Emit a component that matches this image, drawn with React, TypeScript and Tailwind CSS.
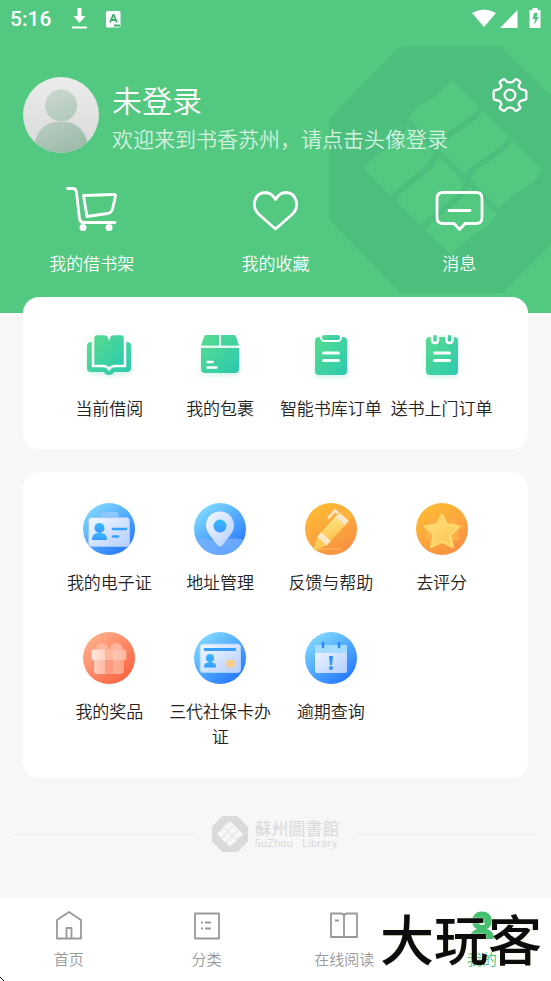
import type { ReactNode } from "react";

const FONT =
  "font-['Roboto','Noto_Sans_CJK_SC',sans-serif]";

function Gradients() {
  return (
    <svg className="absolute h-0 w-0" aria-hidden="true">
      <defs>
        <linearGradient id="green" x1="0" y1="0" x2="1" y2="1">
          <stop offset="0" stopColor="#58dc8c" />
          <stop offset="1" stopColor="#2cc9b2" />
        </linearGradient>
        <linearGradient id="blue" x1="0.15" y1="0.1" x2="0.8" y2="0.95">
          <stop offset="0" stopColor="#80d8ff" />
          <stop offset="0.5" stopColor="#50a8fc" />
          <stop offset="1" stopColor="#2878ff" />
        </linearGradient>
        <linearGradient id="orange" x1="0.2" y1="0" x2="0.8" y2="1">
          <stop offset="0" stopColor="#fdbc34" />
          <stop offset="1" stopColor="#f98f44" />
        </linearGradient>
        <linearGradient id="red" x1="0.1" y1="0.1" x2="0.8" y2="0.9">
          <stop offset="0" stopColor="#ffb08c" />
          <stop offset="1" stopColor="#fa6644" />
        </linearGradient>
        <linearGradient id="paper" x1="0" y1="0" x2="1" y2="1">
          <stop offset="0" stopColor="#f4f9ff" />
          <stop offset="1" stopColor="#b4ceff" />
        </linearGradient>
        <linearGradient id="sky" x1="0" y1="0" x2="0" y2="1">
          <stop offset="0" stopColor="#38bcfc" />
          <stop offset="1" stopColor="#3898fc" />
        </linearGradient>
        <linearGradient id="gold" x1="0" y1="0" x2="1" y2="1">
          <stop offset="0" stopColor="#ffe484" />
          <stop offset="1" stopColor="#fcc04c" />
        </linearGradient>
        <linearGradient id="blush" x1="0" y1="0" x2="1" y2="0">
          <stop offset="0" stopColor="#ffe6dc" />
          <stop offset="1" stopColor="#fcb49c" />
        </linearGradient>
        <linearGradient id="avatarBack" x1="0" y1="0" x2="0" y2="1">
          <stop offset="0" stopColor="#ececec" />
          <stop offset="1" stopColor="#d8d8d8" />
        </linearGradient>
        <linearGradient id="avatarBody" gradientUnits="userSpaceOnUse" x1="24" y1="12" x2="52" y2="76">
          <stop offset="0" stopColor="#ccd9d1" />
          <stop offset="1" stopColor="#9cbaa8" />
        </linearGradient>
        <clipPath id="avatarClip">
          <circle cx="38" cy="38" r="38" />
        </clipPath>
        <clipPath id="discClip">
          <circle cx="26" cy="26" r="26" />
        </clipPath>
      </defs>
    </svg>
  );
}

function LibraryMark({ className, dark, light }: { className: string; dark: string; light: string }) {
  return (
    <svg viewBox="329 46 246 247" className={className} aria-hidden="true">
      <path d="M401 46H501L575 119V219L503 293H400L329 219V119Z" fill={dark} />
      <path
        d="M452 80L541 169c-4 18-30 22-44 42c-4 18-30 24-46 44L363 169c14-20 41-24 45-47c4-18 30-22 44-42Z"
        fill={light}
      />
      <path
        d="M408 122L497 211M481 109c-14 20-40 24-44 42M437 151c-4 23-31 27-45 49M511 139c-14 20-40 24-44 42M467 181c-4 23-31 27-45 49"
        fill="none"
        stroke={dark}
        strokeWidth="6"
      />
    </svg>
  );
}

function StatusBar() {
  return (
    <div className="flex h-[38px] items-center justify-between pl-[10px] pr-[9px] text-white">
      <div className="flex items-center">
        <span className="w-[62px] text-[21px] font-medium leading-[38px]">5:16</span>
        <svg viewBox="0 0 16 22" className="h-[22px] w-4" fill="currentColor" aria-hidden="true">
          <path d="M5.500 0h4v8h4L7.500 15 1.500 8h4ZM0 18.500h15v2H0Z" />
        </svg>
        <svg viewBox="0 0 15 17" className="ml-[18px] h-[17px] w-[15px]" aria-hidden="true">
          <rect width="14.500" height="16.500" rx="1.500" fill="#fff" />
          <path d="M4 11.500 7.200 4h.6L11 11.500M5.200 9h4.600M8 14.500h6" fill="none" stroke="#3fae6b" strokeWidth="1.800" />
        </svg>
      </div>
      <svg viewBox="0 0 70 22" className="h-[22px] w-[70px]" fill="#fff" aria-hidden="true">
        <path d="M0 5Q12-2 24 5L12 19Z" />
        <path d="M45.500 2V20H28Z" />
        <path d="M57.500 2h3V0h5v2h3V20h-11Z" />
        <path d="M62 5h4l-1.500 4H67l-5 8 1-6h-2.500Z" fill="#53c881" />
      </svg>
    </div>
  );
}

function Avatar() {
  return (
    <svg viewBox="0 0 76 76" className="size-[76px]" aria-hidden="true">
      <g clipPath="url(#avatarClip)">
        <rect width="76" height="76" fill="url(#avatarBack)" />
        <circle cx="38" cy="28.500" r="16" fill="url(#avatarBody)" />
        <path d="M10 76C11 56 21 45 34 45h8c13 0 23 11 24 31Z" fill="url(#avatarBody)" />
      </g>
    </svg>
  );
}

function GearIcon() {
  return (
    <svg viewBox="-54 -54 108 108" className="size-9" fill="none" stroke="#fff" strokeWidth="7" strokeLinejoin="round" aria-hidden="true">
      <path d="M-49-8Q-49-14-43-15L-34-17Q-29-18-27-24Q-25-27-28-32Q-34-39-28-42L-20-47Q-16-49-13-44Q-9-38-4-38H4Q9-38 13-44Q16-49 20-47L28-42Q34-39 28-32Q25-27 27-24Q29-18 34-17L43-15Q49-14 49-8V8Q49 14 43 15L34 17Q29 18 27 24Q25 27 28 32Q34 39 28 42L20 47Q16 49 13 44Q9 38 4 38H-4Q-9 38-13 44Q-16 49-20 47L-28 42Q-34 39-28 32Q-25 27-27 24Q-29 18-34 17L-43 15Q-49 14-49 8Z" />
      <circle r="16" />
    </svg>
  );
}

const shortcuts: { label: string; icon: ReactNode }[] = [
  {
    label: "我的借书架",
    icon: (
      <>
        <path d="M1.500 4.500H7q3 0 3.500 4l3 26q.5 4 4 4H49" />
        <path d="M17.500 11.500 48 10.500q1.500 0 1.500 1.500l-3 13q-1 4-5 4.500L21 32.500Z" />
        <circle cx="17" cy="43.500" r="3.500" fill="#fff" stroke="none" />
        <circle cx="43" cy="43.500" r="3.500" fill="#fff" stroke="none" />
      </>
    ),
  },
  {
    label: "我的收藏",
    icon: <path d="M26.500 45 10 30.500C2 23 5 9 16 8.500c4 0 8 2.500 10.500 7 2.500-4.500 6.500-7 10.500-7C48 9 51 23 43 30.500Z" />,
  },
  {
    label: "消息",
    icon: (
      <>
        <path d="M10 8.500H43q6 0 6 6v19q0 6-6 6H32l-5.500 6-5.500-6H10q-6 0-6-6v-19q0-6 6-6Z" />
        <path d="M16 26.500h21" />
      </>
    ),
  },
];

function Header() {
  return (
    <header className="relative h-[313px] overflow-hidden bg-[#53c881] text-white">
      <LibraryMark
        className="absolute -right-6 top-[46px] h-[247px] w-[246px]"
        dark="#4cbe7e"
        light="#53c881"
      />
      <div className="relative">
        <StatusBar />
        <div className="flex items-start px-[23px] pt-[39px]">
          <button type="button" aria-label="登录" className="shrink-0 rounded-full">
            <Avatar />
          </button>
          <div className="ml-[13px] mt-[5px]">
            <h1 className="text-[30px] font-[350] leading-10">未登录</h1>
            <p className="text-[21px] font-[350] leading-9 text-[#d5f2e0]">欢迎来到书香苏州，请点击头像登录</p>
          </div>
          <button type="button" aria-label="设置" className="ml-auto shrink-0">
            <GearIcon />
          </button>
        </div>
        <div className="mt-[26px] grid grid-cols-3">
          {shortcuts.map((s) => (
            <button key={s.label} type="button" className="flex flex-col items-center gap-4">
              <svg viewBox="0 0 52 52" className="size-[52px]" fill="none" stroke="#fff" strokeWidth="2.800" strokeLinecap="round" strokeLinejoin="round" aria-hidden="true">
                {s.icon}
              </svg>
              <span className="text-[17px] font-[350] leading-6">{s.label}</span>
            </button>
          ))}
        </div>
      </div>
    </header>
  );
}

type Entry = { label: string; icon: ReactNode };

const orders: Entry[] = [
  {
    label: "当前借阅",
    icon: (
      <>
        <path d="M8 13H44q4 0 4 4V39q0 4-4 4H31q-1 3-5 3t-5-3H8q-4 0-4-4V17q0-4 4-4Z" fill="url(#green)" />
        <path d="M10 9Q10 5 14 5H21q4 0 5 3 1-3 5-3h7q4 0 4 4V37H32q-4 0-6 3-2-3-6-3H10Z" fill="url(#green)" stroke="#fff" strokeWidth="2.500" />
      </>
    ),
  },
  {
    label: "我的包裹",
    icon: (
      <>
        <path d="M12 6H25V16.500H7l3-8.500q.5-2 2-2ZM27 6H40q1.500 0 2 2l3 8.500H27ZM7 19H45V40q0 4-4 4H11q-4 0-4-4Z" fill="url(#green)" />
        <path d="M13.500 33h5M13.500 38.500h9" stroke="#fff" strokeWidth="2.500" strokeLinecap="round" />
      </>
    ),
  },
  {
    label: "智能书库订单",
    icon: (
      <>
        <rect x="10" y="8" width="32" height="38" rx="4" fill="url(#green)" />
        <path d="M15 5v3q0 5 5 5h12q5 0 5-5V5Z" fill="#fff" />
        <rect x="17" y="6" width="18" height="5" rx="2.500" fill="url(#green)" />
        <path d="M18.500 24h15M18.500 31.500h15" stroke="#f1fffa" strokeWidth="3" strokeLinecap="round" />
      </>
    ),
  },
  {
    label: "送书上门订单",
    icon: (
      <>
        <rect x="10" y="8" width="32" height="38" rx="4" fill="url(#green)" />
        <path d="M16 5h6v6q0 3-3 3t-3-3ZM30.500 5h6v6q0 3-3 3t-3-3Z" fill="url(#green)" stroke="#fff" strokeWidth="2.500" />
        <path d="M13 3h27v3H13Z" fill="#fff" />
        <path d="M18.500 24h15M18.500 31.500h15" stroke="#fff" strokeWidth="3" strokeLinecap="round" />
      </>
    ),
  },
];

const services: Entry[] = [
  {
    label: "我的电子证",
    icon: (
      <>
        <circle cx="26" cy="26" r="26" fill="url(#blue)" />
        <rect x="17.500" y="9" width="18" height="8" rx="1.500" fill="#8cc8ff" />
        <rect x="5.500" y="14.500" width="41" height="29" rx="3" fill="url(#paper)" stroke="#9cc8ff" />
        <circle cx="16.500" cy="25" r="5" fill="url(#sky)" />
        <path d="M9 37q0-7 6-7h3q6 0 6 7Z" fill="url(#sky)" />
        <path d="M30 26H43M30 33.500h5" stroke="#38a0fc" strokeWidth="2.600" strokeLinecap="round" />
      </>
    ),
  },
  {
    label: "地址管理",
    icon: (
      <>
        <circle cx="26" cy="26" r="26" fill="url(#blue)" />
        <path d="M0 38q8-4 18-1 10-4 17-1 9-2 17 2V52H0Z" clipPath="url(#discClip)" fill="#78b0ff" opacity=".8" />
        <path d="M26 8.500c8 0 14 6 14 14 0 7-6 12-11 19q-3 4-6 0c-5-7-11-12-11-19 0-8 6-14 14-14Z" fill="url(#paper)" />
        <circle cx="26" cy="23" r="6.500" fill="url(#sky)" />
      </>
    ),
  },
  {
    label: "反馈与帮助",
    icon: (
      <>
        <circle cx="26" cy="26" r="26" fill="url(#orange)" />
        <path d="M9 46H36" stroke="#ffb85c" />
        <g transform="translate(27 27) rotate(42)">
          <path d="M-6-16v-4q0-6 6-6t6 6v4Z" fill="#fcb43c" />
          <path d="M-6.500-12h13V12h-13Z" fill="url(#gold)" />
          <path d="M-6.500 14h13L1.500 26q-1.500 2-3 0Z" fill="#fccc58" />
          <path d="M-6.500 9h13v6h-13Z" fill="#ffe8c8" />
          <path d="M-6.500-18h13v6h-13ZM-5.500-18h-6.500v12h2.500v-9h4Z" fill="#ffe8c8" />
        </g>
      </>
    ),
  },
  {
    label: "去评分",
    icon: (
      <>
        <circle cx="26" cy="26" r="26" fill="url(#orange)" />
        <path d="M15 12 19 20H29l-7 18-13-1 1-9-7-6h8ZM37 12l-4 8H26l7 18 10-1-1-9 7-6h-8Z" fill="#fcaf45" />
        <path d="M26 12 30.500 21.500 42.500 23.500 34 32 36.500 43.500 26 38.500 15.500 43.500 18 32 9.500 23.500 21.500 21.500Z" fill="url(#gold)" stroke="#ffd76c" strokeWidth="3" strokeLinejoin="round" />
      </>
    ),
  },
  {
    label: "我的奖品",
    icon: (
      <>
        <circle cx="26" cy="26" r="26" fill="url(#red)" />
        <path d="M12 18q1-7 7-7 6 1 7 7 1-6 7-7 6 0 7 7Z" fill="#ffb49c" />
        <path d="M11 27H41V39q0 3-3 3H14q-3 0-3-3Z" fill="url(#blush)" opacity=".7" />
        <rect x="8.500" y="17.500" width="35" height="10.500" rx="2" fill="url(#blush)" />
        <path d="M22 17.500h8V42H22Z" fill="#ff9c80" />
        <path d="M22 17.500h8V28H22Z" fill="#ffb89c" />
      </>
    ),
  },
  {
    label: "三代社保卡办证",
    icon: (
      <>
        <circle cx="26" cy="26" r="26" fill="url(#blue)" />
        <rect x="6" y="12" width="40.500" height="28.500" rx="3" fill="url(#paper)" stroke="#a8d0ff" />
        <path d="M10 16H42v3H10Z" fill="#38a0fc" />
        <circle cx="16" cy="26" r="4" fill="url(#sky)" />
        <path d="M14.500 28h3q0 3 2 3 2.500 0 2.500 4.500H10Q10 31 12.500 31q2 0 2-3Z" fill="url(#sky)" />
        <rect x="32" y="28" width="9" height="7.500" rx="1.500" fill="#f4cc94" />
      </>
    ),
  },
  {
    label: "逾期查询",
    icon: (
      <>
        <circle cx="26" cy="26" r="26" fill="url(#blue)" />
        <rect x="10" y="13" width="32" height="28" rx="2" fill="url(#paper)" />
        <path d="M12 13H40q2 0 2 2v6H10V15q0-2 2-2Z" fill="#a4dcff" />
        <path d="M18 11v4M34 11v4" stroke="#2888f4" strokeWidth="2.600" strokeLinecap="round" />
        <path d="M24 24h4l-1 9h-2Z" fill="#3090fc" />
        <circle cx="26" cy="36" r="2" fill="#3090fc" />
      </>
    ),
  },
];

function EntryGrid({ entries, className, shadow = "" }: { entries: Entry[]; className: string; shadow?: string }) {
  return (
    <section className={`relative mx-[23px] grid grid-cols-4 gap-y-9 rounded-2xl bg-white px-[31px] ${className}`}>
      {entries.map((e) => (
        <button key={e.label} type="button" className="flex flex-col items-center gap-4">
          <svg viewBox="0 0 52 52" className={`size-[52px] ${shadow}`} aria-hidden="true">
            {e.icon}
          </svg>
          <span className="w-[102px] text-center text-[17px] font-[350] leading-[25px] text-[#222]">{e.label}</span>
        </button>
      ))}
    </section>
  );
}

function LibraryFooter() {
  return (
    <div className="mb-[46px] mt-[38px] flex items-center px-[14px] text-[#d8d8d8]">
      <span className="h-px flex-1 bg-[#ededed]" />
      <div className="flex items-center px-4">
        <LibraryMark className="size-9" dark="#dadada" light="#f7f7f7" />
        <div className="ml-[7px]">
          <p className="font-['Noto_Sans_CJK_TC',sans-serif] text-[17px] font-normal leading-5">蘇州圖書館</p>
          <p className="whitespace-pre font-['DejaVu_Sans',sans-serif] text-[10px] leading-3">SuZhou   Library</p>
        </div>
      </div>
      <span className="h-px flex-1 bg-[#ededed]" />
    </div>
  );
}

const tabs: { label: string; active?: boolean; icon: ReactNode }[] = [
  { label: "首页", icon: <path d="M3 10 15 2 27 10V28.500H3ZM12.500 28.500V18h5v10.500" /> },
  {
    label: "分类",
    icon: <path d="M3 3.500H27V28.500H3ZM9 12.500h2M13 12.500h6M9 18.500h2M13 18.500h6" />,
  },
  {
    label: "在线阅读",
    icon: <path d="M2 3.500H12q3 0 3 3 0-3 3-3H28V27H2ZM15 6V27M6 10.500h4" />,
  },
  {
    label: "我的",
    active: true,
    icon: (
      <>
        <path d="M3 29q0-8 7-10-5-3-5-8 1-9.500 10-9.500t10 9.500q0 5-5 8 7 2 7 10Z" fill="#45bf70" stroke="none" />
        <path d="M12.500 13q2.500 2 5 0" stroke="#fff" />
      </>
    ),
  },
];

function TabBar() {
  return (
    <nav className="relative grid grid-cols-4 bg-white pb-[11px] pt-3">
      {tabs.map((t) => (
        <a
          key={t.label}
          href="#"
          aria-current={t.active ? "page" : undefined}
          className={`flex flex-col items-center gap-[10px] ${t.active ? "text-[#45bf70]" : "text-[#999]"}`}
        >
          <svg viewBox="0 0 30 30" className="size-[30px]" fill="none" stroke="currentColor" strokeWidth="1.800" strokeLinejoin="round" aria-hidden="true">
            {t.icon}
          </svg>
          <span className="text-[15px] font-[350] leading-5">{t.label}</span>
        </a>
      ))}
      <span className="pointer-events-none absolute bottom-[6px] right-[9px] whitespace-nowrap text-[54px] font-medium leading-[64px] text-[#0c0c0c] [text-shadow:0_0_2px_#f3ecc8]">
        大玩客
      </span>
      <svg viewBox="0 0 4 4" className="absolute bottom-0 left-0 size-1" aria-hidden="true">
        <path d="M0 0h1v1H0ZM1 1h1v1H1ZM2 2h1v1H2ZM3 3h1v1H3Z" fill="#000" />
      </svg>
    </nav>
  );
}

export default function App() {
  return (
    <div className={`flex min-h-screen flex-col bg-[#f7f7f7] ${FONT}`}>
      <Gradients />
      <Header />
      <main className="flex-1">
        <EntryGrid
          entries={orders}
          className="-mt-4 pb-[27px] pt-8"
          shadow="drop-shadow-[0_3px_2px_rgba(60,205,160,0.2)]"
        />
        <EntryGrid entries={services} className="mt-[23px] pb-7 pt-[31px]" />
        <LibraryFooter />
      </main>
      <TabBar />
    </div>
  );
}
